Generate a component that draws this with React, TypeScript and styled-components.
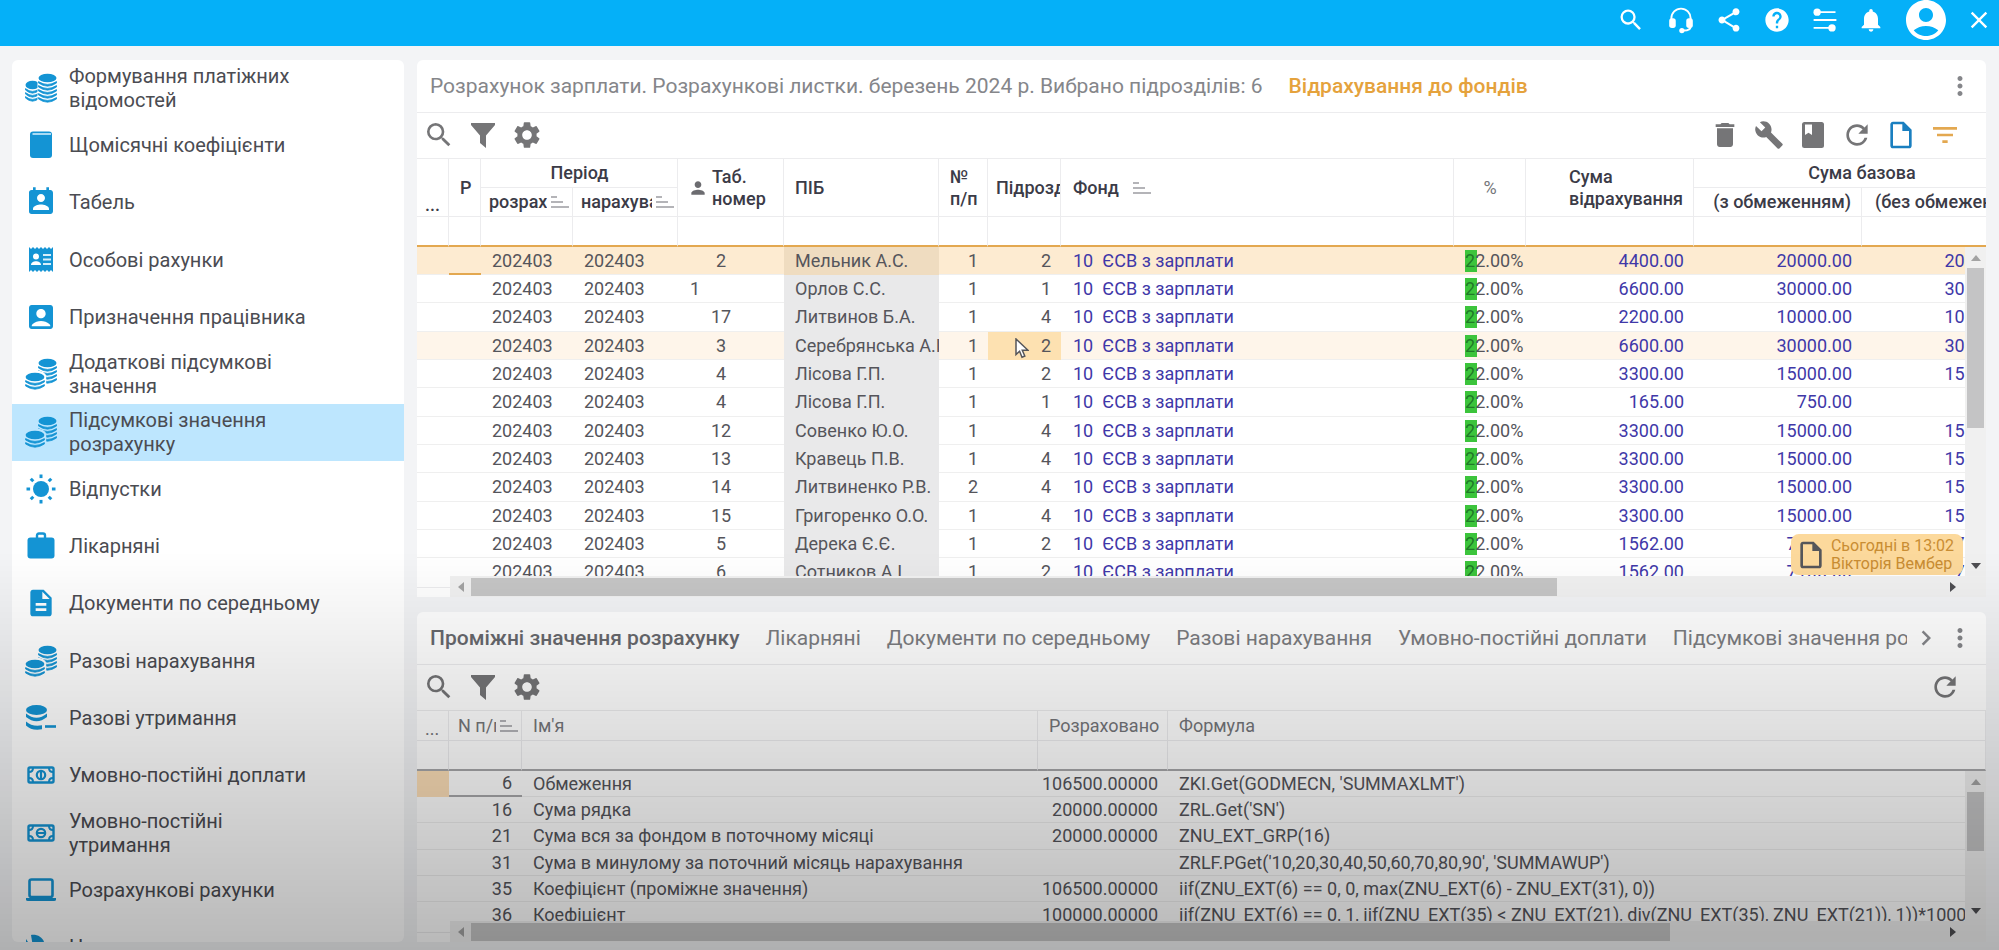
import React from "react";
import styled, { createGlobalStyle, css } from "styled-components";
import {
  MdSearch, MdShare, MdHelp, MdNotifications, MdAccountCircle, MdClose, MdMoreVert,
  MdSettings, MdDelete, MdBuild, MdRefresh, MdOutlineInsertDriveFile, MdFilterList,
  MdChevronRight, MdPerson, MdAccountBox, MdPermContactCalendar, MdDescription,
} from "react-icons/md";

const GlobalStyle = createGlobalStyle`
  *, *::before, *::after { box-sizing: border-box; }
  html, body, #root { height: 100%; }
  body { margin: 0; background: #f3f4f6; font-family: Roboto, "Noto Sans", sans-serif; font-size: 18px; color: #4a4a50; }
  button { font: inherit; border: 0; background: none; padding: 0; margin: 0; cursor: pointer; color: inherit; }
  svg { display: block; flex: none; }
`;

/* ---------- layout ---------- */

const Page = styled.div`
  height: 100vh;
  display: flex;
  flex-direction: column;
  overflow: hidden;
`;

const TopBar = styled.header`
  flex: none;
  height: 46px;
  padding-bottom: 6px;
  display: flex;
  align-items: center;
  justify-content: flex-end;
  background: #05b0f8;
  color: #fff;
`;

const BarButton = styled.button<{ $w?: number }>`
  width: ${(p) => p.$w ?? 48}px;
  height: 40px;
  display: flex;
  align-items: center;
  justify-content: center;
`;

const Workspace = styled.div`
  flex: 1;
  min-height: 0;
  display: flex;
  gap: 13px;
  padding: 14px 13px 8px 12px;
`;

const Sidebar = styled.nav`
  flex: none;
  width: 392px;
  overflow: hidden;
  background: #fff;
  border-radius: 6px;
`;

const MenuList = styled.ul`
  list-style: none;
  margin: 0;
  padding: 0;
  height: 917px;
  display: grid;
  grid-template-rows: repeat(16, 1fr);
`;

const MenuLink = styled.a<{ $active?: boolean }>`
  height: 100%;
  display: flex;
  align-items: center;
  gap: 12px;
  padding: 0 0 2px 13px;
  font-size: 20px;
  line-height: 24px;
  color: #4b4c52;
  text-decoration: none;
  background: ${(p) => (p.$active ? "#bde6fe" : "transparent")};
  svg { color: #1494d4; }
`;

const MenuText = styled.span`
  max-width: 256px;
`;

const Main = styled.main`
  flex: 1;
  min-width: 0;
  display: grid;
  grid-template-rows: 537fr 330fr;
  gap: 15px;
`;

const Panel = styled.section`
  min-width: 0;
  min-height: 0;
  display: flex;
  flex-direction: column;
  overflow: hidden;
  background: #fff;
  border-radius: 6px 6px 0 0;
`;

const TitleRow = styled.div`
  flex: none;
  height: 53px;
  padding: 0 11px 0 13px;
  display: flex;
  align-items: center;
  border-bottom: 1px solid #ececee;
  font-size: 21px;
  color: #85868a;
`;

const Crumb = styled.h1`
  margin: 0 26px 0 0;
  font-size: 21px;
  font-weight: 400;
`;

const CurrentCrumb = styled.span`
  color: #e5a23c;
  font-weight: 500;
`;

const Spacer = styled.div`
  flex: 1;
`;

const Tabs = styled.div`
  flex: 1;
  min-width: 0;
  display: flex;
  gap: 26px;
  overflow: hidden;
`;

const Tab = styled.button<{ $active?: boolean }>`
  flex: none;
  line-height: 28px;
  font-weight: ${(p) => (p.$active ? 500 : 400)};
  color: ${(p) => (p.$active ? "#68696e" : "#7c7d81")};
`;

const Toolbar = styled.div`
  flex: none;
  height: 45px;
  padding: 0 19px 2px 0;
  display: flex;
  align-items: center;
  color: #757577;
`;

const ToolButton = styled.button<{ $color?: string; $w?: number }>`
  width: ${(p) => p.$w ?? 44}px;
  height: 40px;
  display: flex;
  align-items: center;
  justify-content: center;
  color: ${(p) => p.$color ?? "inherit"};
`;

/* ---------- tables ---------- */

const Viewport = styled.div`
  flex: 1;
  min-height: 0;
  position: relative;
  overflow: hidden;
  border-top: 1px solid #ececee;
`;

const Grid = styled.table<{ $width: string }>`
  table-layout: fixed;
  width: ${(p) => p.$width};
  border-collapse: separate;
  border-spacing: 0;
  font-size: 18px;
`;

const Head = styled.th<{ $pad?: string; $align?: string; $plain?: boolean; $bottom?: boolean }>`
  height: ${(p) => (p.$plain ? 30 : 29)}px;
  padding: ${(p) => p.$pad ?? "0 10px 0 11px"};
  overflow: hidden;
  white-space: nowrap;
  text-align: ${(p) => p.$align ?? "left"};
  vertical-align: ${(p) => (p.$bottom ? "bottom" : "middle")};
  font-weight: ${(p) => (p.$plain ? 400 : 500)};
  line-height: 22px;
  color: ${(p) => (p.$plain ? "#75767a" : "#3b3b47")};
  border-right: 1px solid #ececee;
  border-bottom: 1px solid #ececee;
`;

const HeadLine = styled.div<{ $align?: string }>`
  display: flex;
  align-items: center;
  justify-content: ${(p) => p.$align ?? "flex-start"};
  gap: 4px;
  svg { color: #6c6c70; }
`;

const HeadClip = styled.span<{ $w?: number }>`
  width: ${(p) => (p.$w ? `${p.$w}px` : "auto")};
  flex: none;
  overflow: hidden;
`;

const HeadBlock = styled.span`
  text-align: left;
`;

const FilterCell = styled.td<{ $line: string }>`
  height: 30px;
  padding: 0;
  border-right: 1px solid #ececee;
  border-bottom: 2px solid ${(p) => p.$line};
`;

const Row = styled.tr<{ $h: number; $state?: "selected" | "hover" }>`
  height: ${(p) => p.$h}px;
  background: ${(p) => (p.$state === "selected" ? "#fdebd1" : p.$state === "hover" ? "#fef5ea" : "#fff")};
  &:nth-child(3n) { height: ${(p) => p.$h + 1}px; }
`;

const Cell = styled.td<{ $align?: string; $link?: boolean; $shade?: string; $mark?: string; $pad?: string }>`
  padding: ${(p) => p.$pad ?? "0 10px 0 11px"};
  line-height: 22px;
  overflow: hidden;
  white-space: pre;
  text-align: ${(p) => p.$align ?? "left"};
  color: ${(p) => (p.$link ? "#4038a8" : "#55555b")};
  border-bottom: 1px solid #efefef;
  ${(p) => p.$shade && css`background: ${p.$shade}; border-bottom-color: ${p.$shade};`}
  ${(p) => p.$mark && css`border-bottom: 2px solid ${p.$mark};`}
`;

const Percent = styled.span`
  display: block;
  background: linear-gradient(#3cc43c, #3cc43c) no-repeat left / 12px 100%;
  &::first-letter { color: #1f7a27; }
`;

const HoverContent = styled.span`
  position: relative;
  display: block;
  svg { position: absolute; left: 16px; top: 3px; }
`;

/* ---------- scrollbars ---------- */

const VBar = styled.div<{ $top: number }>`
  position: absolute;
  top: ${(p) => p.$top}px;
  right: 0;
  bottom: 0;
  width: 21px;
  display: flex;
  flex-direction: column;
  align-items: center;
  background: #f0f0f0;
`;

const VThumb = styled.div<{ $size: string }>`
  width: 17px;
  height: ${(p) => p.$size};
  background: #c4c4c5;
`;

const ArrowBox = styled.button`
  flex: none;
  width: 21px;
  height: 21px;
  display: flex;
  align-items: center;
  justify-content: center;
`;

const HBarRow = styled.div`
  flex: none;
  height: 21px;
  display: flex;
`;

const HBarCorner = styled.div`
  flex: none;
  width: 33px;
  height: 12px;
  border-bottom: 1px solid #ececee;
`;

const HBar = styled.div`
  flex: 1;
  display: flex;
  align-items: center;
  padding-right: 23px;
  background: #f1f1f1;
`;

const HTrack = styled.div`
  flex: 1;
`;

const HThumb = styled.div<{ $size: string }>`
  height: 18px;
  width: ${(p) => p.$size};
  background: #c6c6c6;
`;

const Badge = styled.div`
  position: absolute;
  right: 23px;
  bottom: 1px;
  height: 41px;
  padding: 0 9px 0 4px;
  display: flex;
  align-items: center;
  gap: 4px;
  border-radius: 8px;
  background: #fcd99c;
  color: #55565a;
`;

const BadgeText = styled.div`
  font-size: 16px;
  line-height: 18px;
  color: #c98d33;
`;

const Shade = styled.div`
  position: fixed;
  inset: 0;
  pointer-events: none;
  background: linear-gradient(to bottom, transparent 58%, rgba(0, 0, 0, 0.05) 66%, rgba(0, 0, 0, 0.28) 100%);
`;

/* ---------- drawings ---------- */

const S = ({ size = 32, children }: { size?: number; children: React.ReactNode }) => (
  <svg width={size} height={size} viewBox="0 0 32 32" fill="none" stroke="none" aria-hidden="true">{children}</svg>
);

const Stack = ({ cx, cy, rows, rx = 9 }: { cx: number; cy: number; rows: number; rx?: number }) => (
  <>
    <ellipse cx={cx} cy={cy} rx={rx} ry={4.3} fill="currentColor" />
    {Array.from({ length: rows }, (_, i) => (
      <path key={i} d={`M${cx - rx} ${cy + 3.6 + i * 4}q${rx} 5.600 ${rx * 2} 0v1.400q${-rx} 6.400 ${-rx * 2} 0z`} fill="currentColor" stroke="currentColor" strokeWidth={0.8} />
    ))}
  </>
);

const CoinsIcon = () => (
  <S>
    <Stack cx={7.5} cy={13} rows={3} rx={7} />
    <path d="M12.500 6h19v24h-19z" fill="#fff" />
    <Stack cx={22.5} cy={6} rows={5} />
  </S>
);

const PilesIcon = ({ back = "#fff" }: { back?: string }) => (
  <S>
    <Stack cx={22.5} cy={5} rows={4} />
    <ellipse cx={10} cy={18.5} rx={11.2} ry={6.2} fill={back} />
    <path d="M-1 18.500h22.200V32H-1z" fill={back} />
    <Stack cx={10} cy={19} rows={2} rx={9.4} />
  </S>
);

const BookIcon = () => (
  <S>
    <rect x="5" y="2.500" width="22" height="26.500" rx="3" fill="currentColor" />
    <path d="M7.500 5h18.500" stroke="#a9daf3" strokeWidth="2" />
  </S>
);

const ReceiptIcon = () => (
  <S>
    <path d="M4 3l2 2 2-2 2 2 2-2 2 2 2-2 2 2 2-2 2 2 2-2 2 2 2-2v25l-2-2-2 2-2-2-2 2-2-2-2 2-2-2-2 2-2-2-2 2-2-2-2 2z" fill="currentColor" />
    <circle cx="11" cy="12.500" r="3" fill="#fff" />
    <path d="M6 21c0-5 10-5 10 0z" fill="#fff" />
    <path d="M18 11h8M18 15.500h8M18 20h8" stroke="#d6eefa" strokeWidth="2" />
  </S>
);

const SunIcon = () => (
  <S>
    <circle cx="16" cy="16" r="8" fill="currentColor" />
    {[0, 45, 90, 135, 180, 225, 270, 315].map((a) => (
      <path key={a} d="M16 1.500v3.600" stroke="currentColor" strokeWidth="3" transform={`rotate(${a} 16 16)`} />
    ))}
  </S>
);

const BagIcon = () => (
  <S>
    <path d="M12 8V5.500q0-2 2-2h4q2 0 2 2V8" stroke="currentColor" strokeWidth="2.400" />
    <rect x="2.500" y="7.500" width="27" height="21" rx="3" fill="currentColor" />
  </S>
);

const DebitIcon = () => (
  <S>
    <ellipse cx="11.500" cy="8" rx="10.500" ry="5" fill="currentColor" />
    <path d="M1 11.500q10.500 8.500 21 0v3.500q-10.500 8.500-21 0zM1 19.500q6 5.500 16 3.800v4q-10.500 1.700-16-3.800z" fill="currentColor" />
    <path d="M20 24.500h11" stroke="currentColor" strokeWidth="2.600" />
  </S>
);

const CashIcon = ({ minus }: { minus?: boolean }) => (
  <S>
    <rect x="3.500" y="8.500" width="25" height="15" rx="1.500" stroke="currentColor" strokeWidth="2.400" />
    <path d="M4 13q4 0 4-4M28 13q-4 0-4-4M4 19q4 0 4 4M28 19q-4 0-4 4" stroke="currentColor" strokeWidth="2" />
    <circle cx="16" cy="16" r={4.2} stroke="currentColor" strokeWidth="2.200" />
    <path d={minus ? "M13 16h6" : "M16 13v6"} stroke="currentColor" strokeWidth="2.200" />
  </S>
);

const LaptopIcon = () => (
  <S>
    <rect x="4.500" y="5.500" width="23" height="17.500" rx="2" stroke="currentColor" strokeWidth="2.600" />
    <path d="M1 24h30v1.500q0 1.500-2 1.500H3q-2 0-2-1.500z" fill="currentColor" />
  </S>
);

const TuneIcon = () => (
  <S>
    <path d="M6 4c8-1 14 4 14 12H8z" fill="currentColor" />
    <path d="M1 8v12h8z" fill="currentColor" />
  </S>
);

const FunnelIcon = () => (
  <S>
    <path d="M4 4h24v2L19 16.500V29l-6-5v-7.500L4 6z" fill="currentColor" />
  </S>
);

const NotebookIcon = () => (
  <S>
    <rect x="5" y="3" width="22" height="26" rx="2.500" fill="currentColor" />
    <path d="M8 5.500h7V16l-3.500-2.200L8 16z" fill="#fff" />
  </S>
);

const SlidersIcon = () => (
  <S size={28}>
    <g stroke="#fff" strokeWidth="2.200">
      <path d="M6 7h22M3 16h26M3 25h20" />
    </g>
    <circle cx="7" cy="7" r="4.200" fill="#fff" />
    <circle cx="24" cy="25" r="4.200" fill="#fff" />
  </S>
);

const HeadsetIcon = () => (
  <S size={28}>
    <path d="M5 18v-4a11 11 0 0 1 22 0v9q0 5-8 5" stroke="#fff" strokeWidth="2.200" />
    <rect x="2.500" y="14" width="7.500" height="11" rx="3" fill="#fff" />
    <rect x="22" y="14" width="7.500" height="11" rx="3" fill="#fff" />
    <circle cx="17" cy="28" r="3" fill="#fff" />
  </S>
);

const SortIcon = () => (
  <svg width="18" height="14" viewBox="0 0 18 14" stroke="#b4b4b8" strokeWidth="2" aria-hidden="true">
    <path d="M0 2h6M0 7h12M0 12h18" />
  </svg>
);

const CursorIcon = () => (
  <svg width="14" height="21" viewBox="0 0 14 21" fill="#fff" stroke="#55565a" strokeWidth="1.500" aria-hidden="true">
    <path d="M1 1v15.500l3.600-3.300 2.400 6 2.800-1.200-2.500-5.700H13z" />
  </svg>
);

const Arrow = ({ dir, faint }: { dir: "up" | "down" | "left" | "right"; faint?: boolean }) => {
  const angle = { up: 0, right: 90, down: 180, left: 270 }[dir];
  return (
    <svg width="10" height="10" viewBox="0 0 10 10" aria-hidden="true">
      <path d="M0 8l5-6 5 6z" fill={faint ? "#a3a3a3" : "#4e4e52"} transform={`rotate(${angle} 5 5)`} />
    </svg>
  );
};

/* ---------- data ---------- */

const menu: { text: string; icon: React.ReactNode; active?: boolean }[] = [
  { text: "Формування платіжних відомостей", icon: <CoinsIcon /> },
  { text: "Щомісячні коефіцієнти", icon: <BookIcon /> },
  { text: "Табель", icon: <MdPermContactCalendar size={32} /> },
  { text: "Особові рахунки", icon: <ReceiptIcon /> },
  { text: "Призначення працівника", icon: <MdAccountBox size={32} /> },
  { text: "Додаткові підсумкові значення", icon: <PilesIcon /> },
  { text: "Підсумкові значення розрахунку", icon: <PilesIcon back="#bde6fe" />, active: true },
  { text: "Відпустки", icon: <SunIcon /> },
  { text: "Лікарняні", icon: <BagIcon /> },
  { text: "Документи по середньому", icon: <MdDescription size={32} /> },
  { text: "Разові нарахування", icon: <PilesIcon /> },
  { text: "Разові утримання", icon: <DebitIcon /> },
  { text: "Умовно-постійні доплати", icon: <CashIcon /> },
  { text: "Умовно-постійні утримання", icon: <CashIcon minus /> },
  { text: "Розрахункові рахунки", icon: <LaptopIcon /> },
  { text: "Налаштування", icon: <TuneIcon /> },
];

type FundRow = [tab: string, name: string, no: string, dep: string, sum: string, base: string];
const funds: FundRow[] = [
  ["2", "Мельник А.С.", "1", "2", "4400.00", "20000.00"],
  ["1", "Орлов С.С.", "1", "1", "6600.00", "30000.00"],
  ["17", "Литвинов Б.А.", "1", "4", "2200.00", "10000.00"],
  ["3", "Серебрянська А.І.", "1", "2", "6600.00", "30000.00"],
  ["4", "Лісова Г.П.", "1", "2", "3300.00", "15000.00"],
  ["4", "Лісова Г.П.", "1", "1", "165.00", "750.00"],
  ["12", "Совенко Ю.О.", "1", "4", "3300.00", "15000.00"],
  ["13", "Кравець П.В.", "1", "4", "3300.00", "15000.00"],
  ["14", "Литвиненко Р.В.", "2", "4", "3300.00", "15000.00"],
  ["15", "Григоренко О.О.", "1", "4", "3300.00", "15000.00"],
  ["5", "Дерека Є.Є.", "1", "2", "1562.00", "7100.00"],
  ["6", "Сотников А.І.", "1", "2", "1562.00", "7100.00"],
];

const formulas = [
  ["6", "Обмеження", "106500.00000", "ZKI.Get(GODMECN, 'SUMMAXLMT')"],
  ["16", "Сума рядка", "20000.00000", "ZRL.Get('SN')"],
  ["21", "Сума вся за фондом в поточному місяці", "20000.00000", "ZNU_EXT_GRP(16)"],
  ["31", "Сума в минулому за поточний місяць нарахування", "", "ZRLF.PGet('10,20,30,40,50,60,70,80,90', 'SUMMAWUP')"],
  ["35", "Коефіцієнт (проміжне значення)", "106500.00000", "iif(ZNU_EXT(6) == 0, 0, max(ZNU_EXT(6) - ZNU_EXT(31), 0))"],
  ["36", "Коефіцієнт", "100000.00000", "iif(ZNU_EXT(6) == 0, 1, iif(ZNU_EXT(35) < ZNU_EXT(21), div(ZNU_EXT(35), ZNU_EXT(21)), 1))*100000"],
];

const tabs = [
  "Проміжні значення розрахунку", "Лікарняні", "Документи по середньому",
  "Разові нарахування", "Умовно-постійні доплати", "Підсумкові значення розрахунку",
];

const fundCols = [32, 32, 92, 105, 106, 155, 49, 73, 393, 72, 168, 168, 168];
const ORANGE = "#e3a850";

const LeftTools = () => (
  <>
    <ToolButton aria-label="Пошук"><MdSearch size={32} /></ToolButton>
    <ToolButton aria-label="Фільтр"><FunnelIcon /></ToolButton>
    <ToolButton aria-label="Налаштування"><MdSettings size={32} /></ToolButton>
    <Spacer />
  </>
);

const HScroll = ({ size }: { size: string }) => (
  <HBarRow>
    <HBarCorner />
    <HBar>
      <ArrowBox aria-label="Ліворуч"><Arrow dir="left" faint /></ArrowBox>
      <HTrack><HThumb $size={size} /></HTrack>
      <ArrowBox aria-label="Праворуч"><Arrow dir="right" /></ArrowBox>
    </HBar>
  </HBarRow>
);

const VScroll = ({ top, size }: { top: number; size: string }) => (
  <VBar $top={top}>
    <ArrowBox aria-label="Вгору"><Arrow dir="up" faint /></ArrowBox>
    <VThumb $size={size} />
    <Spacer />
    <ArrowBox aria-label="Вниз"><Arrow dir="down" /></ArrowBox>
  </VBar>
);

const FundTable = () => (
  <Grid $width="1613px">
    <colgroup>{fundCols.map((w, i) => <col key={i} style={{ width: w }} />)}</colgroup>
    <thead>
      <tr>
        <Head rowSpan={2} $bottom $pad="0 0 0 8px">...</Head>
        <Head rowSpan={2}>Р</Head>
        <Head colSpan={2} $align="center">Період</Head>
        <Head rowSpan={2} $pad="0 0 0 10px">
          <HeadLine><MdPerson size={20} /><HeadBlock>Таб.<br />номер</HeadBlock></HeadLine>
        </Head>
        <Head rowSpan={2}>ПІБ</Head>
        <Head rowSpan={2} $pad="0 0 0 11px">№<br />п/п</Head>
        <Head rowSpan={2} $pad="0 0 0 8px">Підрозділ</Head>
        <Head rowSpan={2} $pad="0 12px"><HeadLine><HeadClip $w={56}>Фонд</HeadClip><SortIcon /></HeadLine></Head>
        <Head rowSpan={2} $align="center" $plain>%</Head>
        <Head rowSpan={2}><HeadLine $align="flex-end"><HeadBlock>Сума<br />відрахування</HeadBlock></HeadLine></Head>
        <Head colSpan={2} $align="center">Сума базова</Head>
      </tr>
      <tr>
        <Head $pad="0 0 0 8px"><HeadLine><HeadClip $w={58}>розрахунку</HeadClip><SortIcon /></HeadLine></Head>
        <Head $pad="0 0 0 8px"><HeadLine><HeadClip $w={71}>нарахування</HeadClip><SortIcon /></HeadLine></Head>
        <Head $align="right">(з обмеженням)</Head>
        <Head $align="right">(без обмеження)</Head>
      </tr>
      <tr>{fundCols.map((_, i) => <FilterCell key={i} $line={ORANGE} />)}</tr>
    </thead>
    <tbody>
      {funds.map(([tab, name, no, dep, sum, base], i) => {
        const state = i === 0 ? "selected" : i === 3 ? "hover" : undefined;
        return (
          <Row key={i} $h={28} $state={state}>
            <Cell />
            <Cell $mark={i === 0 ? ORANGE : undefined} />
            <Cell>202403</Cell>
            <Cell>202403</Cell>
            <Cell $align={i === 1 ? "left" : "center"} $pad={i === 1 ? "0 12px" : "0 20px 0 0"}>{tab}</Cell>
            <Cell $shade={i === 0 ? "#efdcc0" : "#e9e9ea"} $pad="0 0 0 11px">{name}</Cell>
            <Cell $align="right">{no}</Cell>
            <Cell $align="right" $shade={i === 3 ? "#fde1b1" : undefined}>
              {i === 3 ? <HoverContent><CursorIcon />{dep}</HoverContent> : dep}
            </Cell>
            <Cell $link $pad="0 12px">{"10  ЄСВ з зарплати"}</Cell>
            <Cell $pad="0 0 0 11px"><Percent>22.00%</Percent></Cell>
            <Cell $align="right" $link>{sum}</Cell>
            <Cell $align="right" $link>{base}</Cell>
            <Cell $align="right" $link>{base}</Cell>
          </Row>
        );
      })}
    </tbody>
  </Grid>
);

const FormulaTable = () => (
  <Grid $width="100%">
    <colgroup>
      {[32, 73, 516, 130].map((w, i) => <col key={i} style={{ width: w }} />)}
      <col />
    </colgroup>
    <thead>
      <tr>
        <Head $plain $bottom $pad="0 0 0 8px">...</Head>
        <Head $plain $pad="0 0 0 9px"><HeadLine><HeadClip $w={38}>N п/п</HeadClip><SortIcon /></HeadLine></Head>
        <Head $plain>Ім'я</Head>
        <Head $plain>Розраховано</Head>
        <Head $plain>Формула</Head>
      </tr>
      <tr>{[0, 1, 2, 3, 4].map((i) => <FilterCell key={i} $line="#a8a8aa" />)}</tr>
    </thead>
    <tbody>
      {formulas.map(([n, name, value, formula], i) => (
        <Row key={n} $h={26}>
          <Cell $shade={i === 0 ? "#fddfb8" : undefined} />
          <Cell $align="right" $mark={i === 0 ? "#a8a8aa" : undefined}>{n}</Cell>
          <Cell>{name}</Cell>
          <Cell $align="right" $pad="0 10px 0 0">{value}</Cell>
          <Cell>{formula}</Cell>
        </Row>
      ))}
    </tbody>
  </Grid>
);

export default function App() {
  return (
    <Page>
      <GlobalStyle />
      <TopBar>
        <BarButton aria-label="Пошук" $w={52}><MdSearch size={28} /></BarButton>
        <BarButton aria-label="Підтримка"><HeadsetIcon /></BarButton>
        <BarButton aria-label="Поділитися"><MdShare size={28} /></BarButton>
        <BarButton aria-label="Довідка"><MdHelp size={28} /></BarButton>
        <BarButton aria-label="Параметри"><SlidersIcon /></BarButton>
        <BarButton aria-label="Сповіщення" $w={44}><MdNotifications size={28} /></BarButton>
        <BarButton aria-label="Користувач" $w={66}><MdAccountCircle size={48} /></BarButton>
        <BarButton aria-label="Закрити" $w={40}><MdClose size={28} /></BarButton>
      </TopBar>
      <Workspace>
        <Sidebar>
          <MenuList>
            {menu.map((m) => (
              <li key={m.text}>
                <MenuLink href="#" $active={m.active}>{m.icon}<MenuText>{m.text}</MenuText></MenuLink>
              </li>
            ))}
          </MenuList>
        </Sidebar>
        <Main>
          <Panel>
            <TitleRow>
              <Crumb>Розрахунок зарплати. Розрахункові листки. березень 2024 р. Вибрано підрозділів: 6</Crumb>
              <CurrentCrumb>Відрахування до фондів</CurrentCrumb>
              <Spacer />
              <button aria-label="Меню"><MdMoreVert size={30} /></button>
            </TitleRow>
            <Toolbar>
              <LeftTools />
              <ToolButton aria-label="Видалити"><MdDelete size={32} /></ToolButton>
              <ToolButton aria-label="Сервіс"><MdBuild size={30} /></ToolButton>
              <ToolButton aria-label="Журнал"><NotebookIcon /></ToolButton>
              <ToolButton aria-label="Оновити"><MdRefresh size={32} /></ToolButton>
              <ToolButton aria-label="Документ" $color="#1a7fc0"><MdOutlineInsertDriveFile size={32} /></ToolButton>
              <ToolButton aria-label="Відбір" $color={ORANGE}><MdFilterList size={32} /></ToolButton>
            </Toolbar>
            <Viewport>
              <FundTable />
              <VScroll top={88} size="160px" />
              <Badge>
                <MdOutlineInsertDriveFile size={32} />
                <BadgeText>Сьогодні в 13:02<br />Вікторія Вембер</BadgeText>
              </Badge>
            </Viewport>
            <HScroll size="73.8%" />
          </Panel>
          <Panel>
            <TitleRow>
              <Tabs>{tabs.map((t, i) => <Tab key={t} $active={i === 0}>{t}</Tab>)}</Tabs>
              <ToolButton $w={38} aria-label="Наступні вкладки"><MdChevronRight size={30} /></ToolButton>
              <button aria-label="Меню"><MdMoreVert size={30} /></button>
            </TitleRow>
            <Toolbar>
              <LeftTools />
              <ToolButton aria-label="Оновити"><MdRefresh size={32} /></ToolButton>
            </Toolbar>
            <Viewport>
              <FormulaTable />
              <VScroll top={60} size="59px" />
            </Viewport>
            <HScroll size="81.5%" />
          </Panel>
        </Main>
      </Workspace>
      <Shade />
    </Page>
  );
}
